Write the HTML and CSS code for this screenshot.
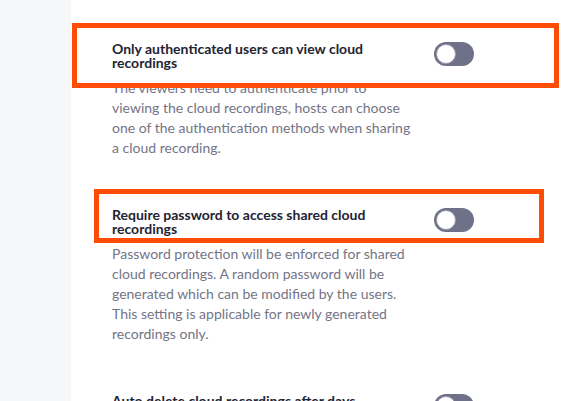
FILE: index.html
```html
<!DOCTYPE html>
<html>
<head>
<meta charset="utf-8">
<link rel="stylesheet" href="styles.css">
</head>
<body>
<div class="page">
  <aside class="sidebar"></aside>
  <main class="main">
    <section class="setting">
      <div class="text">
        <h3 class="title">Only authenticated users can view cloud recordings</h3>
        <p class="desc">The viewers need to authenticate prior to viewing the cloud recordings, hosts can choose one of the authentication methods when sharing a cloud recording.</p>
      </div>
      <span class="toggle"><span class="knob"></span></span>
    </section>
    <section class="setting">
      <div class="text">
        <h3 class="title">Require password to access shared cloud recordings</h3>
        <p class="desc">Password protection will be enforced for shared cloud recordings. A random password will be generated which can be modified by the users. This setting is applicable for newly generated recordings only.</p>
      </div>
      <span class="toggle"><span class="knob"></span></span>
    </section>
    <section class="setting">
      <div class="text">
        <h3 class="title">Auto delete cloud recordings after days</h3>
        <p class="desc">Allow Zoom to automatically delete recordings after a specified number of days.</p>
      </div>
      <span class="toggle"><span class="knob"></span></span>
    </section>
  </main>
  <div class="mark mark-one"></div>
  <div class="mark mark-two"></div>
</div>
</body>
</html>
```

FILE: styles.css
```css
html, body {
  margin: 0;
  padding: 0;
  background: #ffffff;
  overflow: hidden;
}

.page {
  position: relative;
  display: flex;
  width: 587px;
  height: 401px;
  overflow: hidden;
  font-family: Lato, "Open Sans", sans-serif;
}

.sidebar {
  flex: 0 0 71px;
  background: #f6f7f9;
}

.main {
  flex: 1;
  padding: 42px 0 0 41px;
  display: flex;
  flex-direction: column;
  gap: 50px;
}

.setting {
  display: flex;
  align-items: flex-start;
  gap: 21px;
}

.text {
  width: 301px;
  flex: 0 0 301px;
}

.title {
  margin: 0;
  font-size: 14px;
  line-height: 14px;
  font-weight: 700;
  color: #232333;
}

.desc {
  margin: 8px 0 0;
  font-size: 14px;
  line-height: 20px;
  font-weight: 400;
  color: #747487;
}

.toggle {
  position: relative;
  flex: 0 0 40px;
  width: 40px;
  height: 24px;
  border-radius: 12px;
  background: #6e7187;
}

.knob {
  position: absolute;
  left: 2px;
  top: 2px;
  width: 18px;
  height: 18px;
  border-radius: 50%;
  background: #ffffff;
  border: 1px solid #9a9cac;
}

.mark {
  position: absolute;
  border: 5px solid #ff4c06;
  box-sizing: border-box;
}

.mark-one {
  left: 72px;
  top: 23px;
  width: 487px;
  height: 65px;
}

.mark-two {
  left: 94px;
  top: 189px;
  width: 450px;
  height: 54px;
}
```
